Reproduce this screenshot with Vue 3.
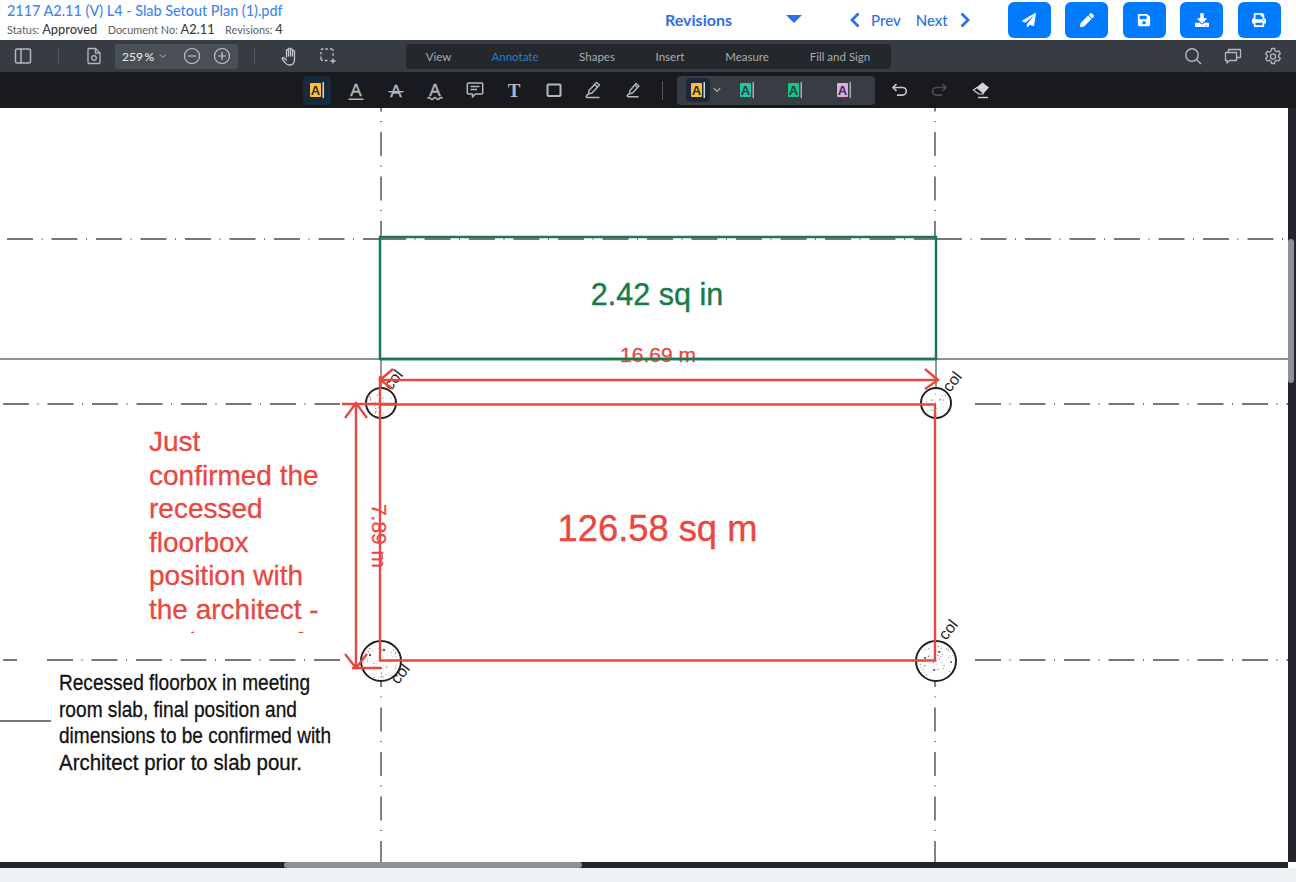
<template>
  <div class="viewer">
    <header class="doc-header">
      <div class="doc-info">
        <div class="doc-title">2117 A2.11 (V) L4 - Slab Setout Plan (1).pdf</div>
        <div class="doc-meta">
          <span>Status: <b>Approved</b></span>
          <span>Document No: <b>A2.11</b></span>
          <span>Revisions: <b>4</b></span>
        </div>
      </div>
      <div class="revisions">
        <span>Revisions</span>
        <i class="caret"></i>
      </div>
      <div class="pager">
        <svg width="12" height="16" viewBox="0 0 12 16"><path d="M9.500 1.500 3 8l6.500 6.500" fill="none" stroke="#2b6fe6" stroke-width="2.800"/></svg>
        <span class="prev">Prev</span>
        <span class="next">Next</span>
        <svg width="12" height="16" viewBox="0 0 12 16"><path d="m2.500 1.500 6.500 6.500-6.500 6.500" fill="none" stroke="#2b6fe6" stroke-width="2.800"/></svg>
      </div>
      <div class="actions">
        <button v-for="a in actions" :key="a.name" class="action" :title="a.name">
          <svg width="14" height="14" :viewBox="a.box"><path :d="a.d" fill="#fff"/></svg>
        </button>
      </div>
    </header>

    <div class="toolbar">
      <div class="tool-left">
        <svg class="ic panel" width="18" height="18" viewBox="0 0 18 18" fill="none" stroke="#b4b8bd" stroke-width="1.500"><rect x="1.500" y="2" width="15" height="14" rx="1.500"/><path d="M7 2v14"/></svg>
        <i class="divider d1"></i>
        <svg class="ic file" width="16" height="18" viewBox="0 0 16 18" fill="none" stroke="#b4b8bd" stroke-width="1.300"><path d="M2 2.500A1 1 0 0 1 3 1.500h6.500L14 6v9.500a1 1 0 0 1-1 1H3a1 1 0 0 1-1-1z"/><path d="M9.500 1.500V6H14"/><circle cx="8" cy="11" r="2.300"/></svg>
        <div class="zoom-box">
          <span class="zoom-val">259 %</span>
          <svg width="8" height="6" viewBox="0 0 8 6"><path d="m1 1.500 3 3 3-3" fill="none" stroke="#b4b8bd"/></svg>
          <svg class="zoom-out" width="18" height="18" viewBox="0 0 18 18" fill="none" stroke="#c2c5c9" stroke-width="1.200"><circle cx="9" cy="9" r="7.500"/><path d="M5 9h8"/></svg>
          <svg class="zoom-in" width="18" height="18" viewBox="0 0 18 18" fill="none" stroke="#c2c5c9" stroke-width="1.200"><circle cx="9" cy="9" r="7.500"/><path d="M5 9h8M9 5v8"/></svg>
        </div>
        <i class="divider d2"></i>
        <svg class="ic hand" width="18" height="19" viewBox="0 0 18 19" fill="none" stroke="#c2c5c9" stroke-width="1.300" stroke-linecap="round" stroke-linejoin="round"><path d="M5.500 10V3.500a1 1 0 0 1 2 0V9M7.500 8.500V2.200a1 1 0 0 1 2 0V9M9.500 8.500V2.800a1 1 0 0 1 2 0V9M11.500 9V4.500a1 1 0 0 1 2 0v8c0 3.500-2 5.500-5 5.500-2 0-3.500-1-4.500-2.500L1.300 12c-.6-1 .7-2 1.600-1.200L5.500 13"/></svg>
        <svg class="ic select" width="16" height="16" viewBox="0 0 16 16" fill="none" stroke="#c2c5c9" stroke-width="1.300"><path d="M1 11V2.500A1.500 1.500 0 0 1 2.500 1H12v0M12 1a1.500 1.500 0 0 1 1 1.500V8M1 11a1.500 1.500 0 0 0 1.500 1.500H8" stroke-dasharray="2.500 2"/><path d="M13 10.500v5M10.500 13h5"/></svg>
      </div>
      <nav class="tabs">
        <span v-for="t in tabs" :key="t.name" class="tab" :class="{ on: t.name === 'Annotate' }" :style="{ width: t.w + 'px' }">{{ t.name }}</span>
      </nav>
      <div class="tool-right">
        <svg width="18" height="18" viewBox="0 0 18 18" fill="none" stroke="#b4b8bd" stroke-width="1.400"><circle cx="8" cy="8" r="6.200"/><path d="m12.500 12.500 4.500 4.500"/></svg>
        <svg width="18" height="18" viewBox="0 0 18 18" fill="none" stroke="#b4b8bd" stroke-width="1.300" stroke-linejoin="round"><path d="M1.500 5.500h11v8h-7l-2.500 2.500v-2.500H1.500z"/><path d="M4.500 5.500V2.500h12v8h-4"/></svg>
        <svg width="18" height="18" viewBox="0 0 18 18" fill="none" stroke="#b4b8bd" stroke-width="1.300" stroke-linejoin="round"><path d="M7.500 1.500h3l.5 2.200 1.600.9 2.200-.7 1.500 2.600-1.700 1.500v1.900l1.700 1.500-1.500 2.600-2.200-.7-1.600.9-.5 2.300h-3l-.5-2.300-1.600-.9-2.200.7-1.500-2.600 1.700-1.500V8.500L1.700 7l1.500-2.600 2.200.7L7 4.200z"/><circle cx="9" cy="9.500" r="2.600"/></svg>
      </div>
    </div>

    <div class="annot-bar">
      <div class="annot-icon active">
        <svg width="16" height="24" viewBox="0 -3 16 24">
          <rect x="1" y="2" width="11" height="14" rx="1" fill="#fbbf3c"/>
          <text x="6.500" y="14" class="a-mark" fill="#2a2d33">A</text>
          <rect x="13.500" y="1" width="1.500" height="16" fill="#d4d6d9"/>
        </svg>
      </div>
      <div class="annot-icon">
        <svg width="20" height="24" viewBox="0 -4 20 24">
          <text x="10" y="14" class="a-plain">A</text>
          <rect x="2.500" y="16.500" width="15" height="1.500" fill="#b4b8bd"/>
        </svg>
      </div>
      <div class="annot-icon">
        <svg width="20" height="24" viewBox="0 -4 20 24">
          <text x="10" y="15" class="a-plain">A</text>
          <rect x="2.500" y="9" width="15" height="1.400" fill="#b4b8bd"/>
        </svg>
      </div>
      <div class="annot-icon">
        <svg width="20" height="24" viewBox="0 -4 20 24">
          <text x="10" y="13.500" class="a-plain">A</text>
          <path d="M2.500 16.500q1.500-2 3 0t3 0 3 0 3 0 3 0" fill="none" stroke="#b4b8bd" stroke-width="1.400"/>
        </svg>
      </div>
      <div class="annot-icon">
        <svg width="18" height="18" viewBox="0 0 18 18" fill="none" stroke="#b4b8bd" stroke-width="1.500" stroke-linejoin="round"><path d="M2.300 2h13.400a1 1 0 0 1 1 1v9a1 1 0 0 1-1 1H9.500l-3 3v-3H2.300a1 1 0 0 1-1-1V3a1 1 0 0 1 1-1z"/><path d="M4.500 5.500h9M4.500 8.500h6.500"/></svg>
      </div>
      <div class="annot-icon">
        <svg width="18" height="24" viewBox="0 -3 18 24"><text x="9" y="15.500" class="t-mark">T</text></svg>
      </div>
      <div class="annot-icon">
        <svg width="18" height="18" viewBox="0 0 18 18"><rect x="2.500" y="3.500" width="13" height="11.500" rx="1" fill="none" stroke="#b4b8bd" stroke-width="2"/></svg>
      </div>
      <div class="annot-icon">
        <svg width="18" height="18" viewBox="0 0 18 18" fill="none" stroke="#b4b8bd" stroke-width="1.500" stroke-linejoin="round"><path d="M12.500 1.500l3 2.500-7.500 8-3.500 1 .5-3.500z"/><path d="M10.500 3.500l3 2.500M4 13.500c-2 1-2.500 3-.5 3h12"/></svg>
      </div>
      <div class="annot-icon">
        <svg width="16" height="16" viewBox="0 0 16 16" fill="none" stroke="#b4b8bd" stroke-width="1.400" stroke-linejoin="round"><path d="M11 1.500l3 2.500-6.500 7-3 .8.300-3z"/><path d="M9.500 3l3 2.500M4 12c-2 1-2.500 2.800-.5 2.800h10"/></svg>
      </div>
      <i class="divider d3"></i>
      <div class="style-group">
        <div class="style-current">
          <svg width="16" height="24" viewBox="0 -3 16 24">
            <rect x="1" y="2" width="11" height="14" rx="1" fill="#fbbf3c"/>
            <text x="6.500" y="14" class="a-mark" fill="#2a2d33">A</text>
            <rect x="13.500" y="1" width="1.500" height="16" fill="#d4d6d9"/>
          </svg>
        </div>
        <svg class="style-chev" width="8" height="6" viewBox="0 0 8 6"><path d="m.8 1.200 3.200 3.200 3.200-3.200" fill="none" stroke="#b4b8bd" stroke-width="1.100"/></svg>
        <svg v-for="s in swatches" :key="s.color" class="swatch" :style="{ marginLeft: s.gap + 'px' }" width="16" height="24" viewBox="0 -3 16 24">
          <rect x="1" y="2" width="11" height="14" rx="1" :fill="s.color"/>
          <text x="6.500" y="14" class="a-mark" fill="#2a3a44">A</text>
          <rect x="13.500" y="1" width="1.500" height="16" fill="#a8abb0"/>
        </svg>
      </div>
      <svg class="undo" width="18" height="16" viewBox="0 0 18 16" fill="none" stroke="#c2c5c9" stroke-width="1.700"><path d="M5.500 2 2 5.500 5.500 9"/><path d="M2 5.500h9.500a3.800 3.800 0 0 1 0 7.600H6"/></svg>
      <svg class="redo" width="18" height="16" viewBox="0 0 18 16" fill="none" stroke="#4a4e54" stroke-width="1.700"><path d="M12.500 2 16 5.500 12.500 9"/><path d="M16 5.500H6.500a3.800 3.800 0 0 0 0 7.600H12"/></svg>
      <svg class="eraser" width="18" height="18" viewBox="0 0 18 18"><path d="M10.500 1.500 17 6.500l-6 6.500H6.500L1.500 9z" fill="#d4d6d9"/><path d="M5 6.500l6 5.200L11 13H6.500L1.500 9z" fill="#181a1f" stroke="#d4d6d9" stroke-width="1.200"/><path d="M6 16.500h10" stroke="#d4d6d9" stroke-width="1.400"/></svg>
    </div>

    <main class="page-area">
      <div class="sheet">
        <svg class="drawing" width="1288" height="754" viewBox="0 108 1288 754">
          <defs>
            <clipPath id="noteClip"><rect x="140" y="420" width="200" height="213"/></clipPath>
          </defs>

          <!-- grid lines of the plan -->
          <g fill="none" stroke="#4a4d4f" stroke-width="1.400">
            <g stroke-dasharray="24 9.500 1 10">
              <path d="M381 108V237M935 108V237" stroke-dashoffset="20.500"/>
              <path d="M381 663V862M935 663V862"/>
            </g>
            <g stroke-dasharray="26 8.500 1 9">
              <path d="M7 239H380M936 239H1288"/>
              <path d="M380 239H936" stroke-width="1.600"/>
              <path d="M3 404H340M975 404H1288"/>
              <path d="M47 660H340M975 660H1288"/>
            </g>
            <path d="M3 660H17M0 721H51"/>
            <path d="M0 359H1288M381 359V390M936 359V390" stroke="#6a6c6e"/>
          </g>

          <!-- columns -->
          <g fill="#fff" stroke="#222" stroke-width="2">
            <circle cx="381" cy="403" r="15"/>
            <circle cx="936" cy="403" r="15"/>
            <circle cx="381" cy="661" r="20"/>
            <circle cx="936" cy="661" r="20"/>
          </g>
          <g fill="#555">
            <circle v-for="(d, i) in specks" :key="i" :cx="d[0]" :cy="d[1]" :r="d[2]"/>
          </g>
          <g class="col-label">
            <text transform="translate(391 391) rotate(-52)">col</text>
            <text transform="translate(950 393) rotate(-52)">col</text>
            <text transform="translate(398 685) rotate(-52)">col</text>
            <text transform="translate(946 641) rotate(-52)">col</text>
          </g>

          <!-- area measurement -->
          <rect x="380" y="237" width="556" height="122" fill="none" stroke="#1a7a4c" stroke-width="2.500"/>
          <text x="657" y="305" class="m-green">2.42 sq in</text>

          <!-- red annotations -->
          <text x="658" y="362" class="m-width">16.69 m</text>
          <path d="M380 359H936" stroke="#1a7a4c" stroke-width="2.500"/>
          <g fill="none" stroke="#e8483f" stroke-width="2.400">
            <path d="M380 404.500H935V660.500H380V376"/>
            <path d="M380 380H938M393 369l-13 11 13 9M925 369l13 11-13 9"/>
            <path d="M356 404V668M345 418l11-15 11 15M345 654l11 14 11-14M352 668H381"/>
            <path d="M342 404H395"/>
          </g>
          <text class="m-height" transform="translate(372 536) rotate(90)">7.89 m</text>
          <text x="657.500" y="541" class="m-red">126.58 sq m</text>

          <g class="note-red" clip-path="url(#noteClip)">
            <text v-for="(l, i) in redNote" :key="l" x="149" :y="451 + i * 33.500">{{ l }}</text>
          </g>

          <g class="note-black">
            <text v-for="l in blackNote" :key="l.t" x="59" :y="l.y" :textLength="l.w" lengthAdjust="spacingAndGlyphs">{{ l.t }}</text>
          </g>
        </svg>
        <div class="hscroll"><i class="hthumb"></i></div>
      </div>
      <div class="vscroll"><i class="vthumb"></i></div>
    </main>
    <footer class="page-foot"></footer>
  </div>
</template>

<script setup>
const actions = [
  { name: 'Send', box: '0 0 512 512', d: 'M476 3.2L12.5 270.6c-18.1 10.400-15.800 35.600 2.200 43.200L121 358.400l287.300-253.200c5.500-4.900 13.300 2.600 8.600 8.300L176 407v80.500c0 23.600 28.500 32.900 42.500 15.800L282 426l124.600 52.200c14.200 6 30.400-2.900 33-18.200l72-432C515 7.800 493.300-6.800 476 3.200z' },
  { name: 'Edit', box: '0 0 512 512', d: 'M497.900 142.100l-46.100 46.100c-4.700 4.700-12.300 4.700-17 0l-111-111c-4.700-4.700-4.700-12.300 0-17l46.100-46.100c18.700-18.700 49.100-18.700 67.900 0l60.100 60.100c18.800 18.700 18.800 49.100 0 67.900zM284.200 99.800L21.600 362.400.4 483.900c-2.900 16.400 11.400 30.600 27.800 27.800l121.500-21.300 262.600-262.600c4.700-4.700 4.700-12.300 0-17l-111-111c-4.800-4.700-12.400-4.700-17.100 0z' },
  { name: 'Save', box: '0 0 448 512', d: 'M433.941 129.941l-83.882-83.882A48 48 0 0 0 316.118 32H48C21.490 32 0 53.490 0 80v352c0 26.510 21.490 48 48 48h352c26.510 0 48-21.490 48-48V163.882a48 48 0 0 0-14.059-33.941zM224 416c-35.346 0-64-28.654-64-64 0-35.346 28.654-64 64-64s64 28.654 64 64c0 35.346-28.654 64-64 64zm96-304.520V212c0 6.627-5.373 12-12 12H76c-6.627 0-12-5.373-12-12V108c0-6.627 5.373-12 12-12h228.520c3.183 0 6.235 1.264 8.485 3.515l3.480 3.480A11.996 11.996 0 0 1 320 111.480z' },
  { name: 'Download', box: '0 0 512 512', d: 'M216 0h80c13.300 0 24 10.700 24 24v168h87.700c17.800 0 26.700 21.500 14.100 34.100L269.700 378.300c-7.500 7.500-19.800 7.500-27.300 0L90.100 226.100c-12.600-12.600-3.700-34.100 14.100-34.100H192V24c0-13.300 10.700-24 24-24zm296 376v112c0 13.300-10.700 24-24 24H24c-13.300 0-24-10.700-24-24V376c0-13.300 10.700-24 24-24h146.700l49 49c20.100 20.100 52.500 20.100 72.600 0l49-49H488c13.300 0 24 10.700 24 24zm-124 88c0-11-9-20-20-20s-20 9-20 20 9 20 20 20 20-9 20-20zm64 0c0-11-9-20-20-20s-20 9-20 20 9 20 20 20 20-9 20-20z' },
  { name: 'Print', box: '0 0 512 512', d: 'M448 192V77.250c0-8.490-3.370-16.620-9.370-22.630L393.370 9.370c-6-6-14.140-9.370-22.630-9.370H96C78.330 0 64 14.330 64 32v160c-35.350 0-64 28.650-64 64v112c0 8.840 7.160 16 16 16h48v96c0 17.670 14.330 32 32 32h320c17.670 0 32-14.330 32-32v-96h48c8.840 0 16-7.160 16-16V256c0-35.350-28.650-64-64-64zm-64 256H128v-96h256v96zm0-224H128V64h192v48c0 8.840 7.160 16 16 16h48v96zm48 72c-13.250 0-24-10.750-24-24 0-13.260 10.750-24 24-24s24 10.740 24 24c0 13.250-10.750 24-24 24z' }
]

const tabs = [
  { name: 'View', w: 65 },
  { name: 'Annotate', w: 88 },
  { name: 'Shapes', w: 76 },
  { name: 'Insert', w: 70 },
  { name: 'Measure', w: 84 },
  { name: 'Fill and Sign', w: 102 }
]

const swatches = [
  { color: '#1fc6a4', gap: 18 },
  { color: '#16c48a', gap: 32 },
  { color: '#e3a8e6', gap: 33 }
]

const redNote = ['Just', 'confirmed the', 'recessed', 'floorbox', 'position with', 'the architect -', 'and some of']

const blackNote = [
  { t: 'Recessed floorbox in meeting', y: 690, w: 251 },
  { t: 'room slab, final position and', y: 717, w: 238 },
  { t: 'dimensions to be confirmed with', y: 743, w: 272 },
  { t: 'Architect prior to slab pour.', y: 770, w: 243 }
]

// concrete speckle inside the columns, big dots first then a fine scatter
const specks = [
  [370, 655, 1.2], [384, 650, 1.2], [381, 668, 1], [925, 658, 1.1], [939, 652, 1.1], [951, 662, 1], [934, 670, 1.1]
]
const columns = [[381, 403, 13, 22], [936, 403, 13, 22], [381, 661, 18, 45], [936, 661, 18, 45]]
let seed = 7
const rnd = () => {
  seed = (seed * 16807) % 2147483647
  return seed / 2147483647
}
columns.forEach(([cx, cy, r, n]) => {
  for (let i = 0; i < n; i++) {
    const a = rnd() * Math.PI * 2
    const d = Math.sqrt(rnd()) * r
    specks.push([cx + Math.cos(a) * d, cy + Math.sin(a) * d, 0.3 + rnd() * 0.3])
  }
})
</script>

<style>
html, body { margin: 0; background: #eef2f5; }
</style>

<style scoped>
.viewer {
  width: 1296px;
  height: 882px;
  display: flex;
  flex-direction: column;
  overflow: hidden;
  font-family: Lato, "Liberation Sans", sans-serif;
}

.doc-header {
  height: 40px;
  display: flex;
  align-items: center;
  background: #fff;
  box-sizing: border-box;
  padding-left: 7px;
}
.doc-info { width: 658px; flex: none; }
.doc-title {
  font-size: 14.400px;
  font-weight: 500;
  color: #3f87f0;
  line-height: 20px;
  margin-top: -2px;
}
.doc-meta {
  display: flex;
  gap: 10.500px;
  font-size: 10.900px;
  color: #5b6066;
  line-height: 15px;
  margin-top: 1px;
}
.doc-meta b {
  font-size: 12.800px;
  font-weight: 500;
  color: #3c4046;
}
.revisions {
  width: 137px;
  display: flex;
  align-items: center;
  justify-content: space-between;
  font-size: 16px;
  font-weight: 700;
  color: #2b6fe6;
  flex: none;
  margin-top: -2px;
}
.caret {
  width: 0;
  height: 0;
  border-left: 8px solid transparent;
  border-right: 8px solid transparent;
  border-top: 8px solid #2b6fe6;
}
.pager {
  margin-left: 47px;
  display: flex;
  align-items: center;
  font-size: 15px;
  font-weight: 500;
  color: #2b6fe6;
}
.prev { margin-left: 10px; }
.next { margin: 0 11px 0 15px; }
.actions {
  margin-left: 37px;
  display: flex;
  gap: 14.500px;
}
.action {
  width: 43px;
  height: 36px;
  border: 0;
  border-radius: 6px;
  background: #007bff;
  padding: 0;
  display: flex;
  align-items: center;
  justify-content: center;
}

.toolbar {
  height: 32px;
  background: #373b42;
  display: flex;
  align-items: center;
}
.tool-left {
  width: 406px;
  display: flex;
  align-items: center;
  flex: none;
}
.ic { flex: none; }
.panel { margin-left: 14px; }
.divider {
  display: block;
  width: 1px;
  height: 18px;
  background: #53575d;
  flex: none;
}
.d1 { margin-left: 26px; }
.file { margin-left: 27px; }
.zoom-box {
  margin-left: 13px;
  width: 123px;
  height: 25px;
  background: #4a4e55;
  border-radius: 3px;
  display: flex;
  align-items: center;
  color: #e6e7e9;
  font-size: 12px;
  font-weight: 500;
  box-sizing: border-box;
  padding-left: 7px;
  flex: none;
}
.zoom-val { margin-right: 5px; word-spacing: -1.500px; }
.zoom-out { margin-left: 15.500px; }
.zoom-in { margin-left: 12px; }
.d2 { margin-left: 16px; }
.hand { margin-left: 26px; }
.select { margin-left: 21px; }
.tabs {
  width: 485px;
  height: 25px;
  background: #24272c;
  border-radius: 4px;
  display: flex;
  align-items: center;
  font-size: 11.500px;
  color: #a9adb2;
  flex: none;
}
.tab { text-align: center; }
.tab.on { color: #2b7fc4; }
.tool-right {
  margin-left: auto;
  margin-right: 14px;
  display: flex;
  gap: 22px;
}

.annot-bar {
  height: 36px;
  background: #181a1f;
  display: flex;
  align-items: center;
  padding-left: 297px;
}
.annot-icon {
  width: 39.500px;
  height: 29px;
  display: flex;
  align-items: center;
  justify-content: center;
  flex: none;
  position: relative;
}
.annot-icon.active::before {
  content: "";
  position: absolute;
  left: 6px;
  width: 28px;
  height: 29px;
  border-radius: 4px;
  background: #1b2a3a;
}
.annot-icon svg { position: relative; }
.a-mark {
  font-family: "Liberation Sans", sans-serif;
  font-size: 13px;
  font-weight: 700;
  text-anchor: middle;
}
.a-plain {
  font-family: "Liberation Sans", sans-serif;
  font-size: 17px;
  fill: #b4b8bd;
  stroke: #b4b8bd;
  stroke-width: 0.4;
  text-anchor: middle;
}
.t-mark {
  font-family: "Liberation Serif", serif;
  font-size: 19px;
  font-weight: 700;
  fill: #b4b8bd;
  text-anchor: middle;
}
.d3 { height: 19px; margin-left: 9px; }
.style-group {
  margin-left: 14px;
  width: 198px;
  height: 29px;
  background: #383c43;
  border-radius: 4px;
  display: flex;
  align-items: center;
  box-sizing: border-box;
  padding-left: 9px;
  flex: none;
}
.style-current {
  width: 24px;
  height: 24px;
  background: #1b2a3a;
  border-radius: 4px;
  display: flex;
  align-items: center;
  justify-content: center;
}
.style-chev { margin-left: 3px; }
.undo { margin-left: 16px; }
.redo { margin-left: 21px; }
.eraser { margin-left: 24px; }

.page-area {
  flex: none;
  height: 760px;
  display: flex;
  background: #fff;
}
.sheet {
  width: 1288px;
  display: flex;
  flex-direction: column;
}
.drawing { display: block; background: #fff; }
.hscroll {
  height: 6px;
  background: #22262b;
  position: relative;
}
.hthumb {
  position: absolute;
  left: 284px;
  width: 298px;
  height: 6px;
  border-radius: 3px;
  background: #8b9196;
}
.vscroll {
  width: 8px;
  height: 754px;
  background: #22262b;
  position: relative;
}
.vthumb {
  position: absolute;
  top: 131px;
  width: 6px;
  height: 144px;
  border-radius: 3px;
  background: #8b9196;
}
.page-foot { flex: 1; background: #eef2f5; }

.col-label text {
  font-family: "Liberation Sans", sans-serif;
  font-size: 16px;
  fill: #222;
}
.m-green {
  font-family: "Liberation Sans", sans-serif;
  font-size: 30.500px;
  fill: #1a7a4c;
  stroke: #1a7a4c;
  stroke-width: 0.4;
  text-anchor: middle;
}
.m-red {
  font-family: "Liberation Sans", sans-serif;
  font-size: 36.300px;
  fill: #e8483f;
  stroke: #e8483f;
  stroke-width: 0.4;
  text-anchor: middle;
}
.m-width {
  font-family: "Liberation Sans", sans-serif;
  font-size: 21px;
  fill: #e8483f;
  stroke: #e8483f;
  stroke-width: 0.3;
  text-anchor: middle;
}
.m-height {
  font-family: "Liberation Sans", sans-serif;
  font-size: 21px;
  fill: #e8483f;
  stroke: #e8483f;
  stroke-width: 0.3;
  text-anchor: middle;
}
.note-red text {
  font-family: "Liberation Sans", sans-serif;
  font-size: 28px;
  fill: #e8483f;
  stroke: #e8483f;
  stroke-width: 0.3;
}
.note-black text {
  font-family: "Liberation Sans", sans-serif;
  font-size: 22px;
  fill: #111;
  stroke: #111;
  stroke-width: 0.3;
}
</style>
